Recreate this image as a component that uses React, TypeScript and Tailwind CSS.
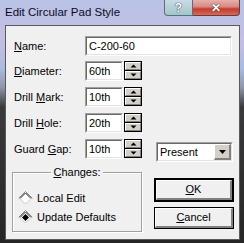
import React from "react";

const Acc = ({ c }: { c: string }) => <span className="underline underline-offset-[1px]">{c}</span>;

const Sunken = ({ className = "", children }: { className?: string; children?: React.ReactNode }) => (
  <div className={`border border-t-[#a0a0a0] border-l-[#a0a0a0] border-r-white border-b-white ${className}`}>
    <div className="h-full border border-t-[#696969] border-l-[#696969] border-r-[#e3e3e3] border-b-[#e3e3e3] bg-white flex items-center pl-[2px]">
      {children}
    </div>
  </div>
);

const SpinHalf = ({ up }: { up?: boolean }) => (
  <div className="flex-1 flex items-center justify-center bg-[#d4d0c8] border-t border-l border-t-white border-l-white border-r border-b border-r-[#808080] border-b-[#808080]">
    <svg width="7" height="4" viewBox="0 0 7 4">
      {up ? <polygon points="0.5,3.5 3.5,0.5 6.5,3.5" fill="#000" /> : <polygon points="0.5,0.5 6.5,0.5 3.5,3.5" fill="#000" />}
    </svg>
  </div>
);

const Spin = () => (
  <div className="w-[18px] h-[19px] ml-px flex flex-col border border-black bg-black gap-px">
    <SpinHalf up />
    <SpinHalf />
  </div>
);

const Row = ({ label, value, spin = true, className = "", children }: { label: React.ReactNode; value: string; spin?: boolean; className?: string; children?: React.ReactNode }) => (
  <div className={`flex items-start h-[20px] ${className}`}>
    <div className="w-[71px] h-[20px] leading-[20px] whitespace-pre">{label}</div>
    {spin ? (
      <>
        <Sunken className="w-[38px] h-[20px]">{value}</Sunken>
        <Spin />
      </>
    ) : (
      <Sunken className="w-[147px] h-[20px]">{value}</Sunken>
    )}
    {children}
  </div>
);

const Diamond = ({ on }: { on?: boolean }) => (
  <svg width="15" height="15" viewBox="0 0 15 15" className="shrink-0">
    <polygon points="7.5,0.5 14.5,7.5 7.5,14.5 0.5,7.5" fill="#fff" />
    <polyline points="0.5,7.5 7.5,0.5 14.5,7.5" fill="none" stroke="#808080" strokeWidth="1" />
    <polyline points="2,7.5 7.5,2 13,7.5" fill="none" stroke="#202020" strokeWidth="1" />
    <polyline points="0.5,7.5 7.5,14.5 14.5,7.5" fill="none" stroke="#e8e8e8" strokeWidth="1" />
    <polyline points="2,7.5 7.5,13 13,7.5" fill="none" stroke="#c8c8c8" strokeWidth="1" />
    {on && <polygon points="7.5,4 11,7.5 7.5,11 4,7.5" fill="#000" />}
  </svg>
);

const Btn = ({ def, children, className = "" }: { def?: boolean; children: React.ReactNode; className?: string }) => (
  <div className={`${def ? "border-2" : "border"} border-black ${className}`}>
    <div className="h-full bg-[#f0f0f0] border-t border-l border-t-white border-l-white border-r-2 border-b-2 border-r-[#808080] border-b-[#808080] flex items-center justify-center">
      {children}
    </div>
  </div>
);

export default function App() {
  return (
    <div className="w-[244px] h-[243px] overflow-hidden bg-[linear-gradient(180deg,#b9c3e6_0%,#c4bde3_18%,#a9bbe0_28%,#8f96a8_36%,#3a3a3c_44%,#262626_100%)] font-['Liberation_Sans',Arial,sans-serif] text-[11px] text-black">
      <div className="h-[25px] flex items-start">
        <div className="pl-[5px] pt-[4px] text-[11.5px] text-[#0b0b1e] leading-[16px]">Edit Circular Pad Style</div>
        <div className="ml-auto mr-[4px] flex">
          <div className="w-[29px] h-[16px] rounded-bl-[4px] border border-t-0 border-[#5b6d80] bg-[linear-gradient(180deg,#c9dbe6_0%,#b7cfd8_50%,#9ec8c8_100%)] flex items-center justify-center text-white font-bold text-[12px] leading-none [text-shadow:0_0_1px_#334,0_0_1px_#334]">?</div>
          <div className="w-[47px] h-[16px] rounded-br-[4px] border border-l-0 border-t-0 border-[#6b3b3b] bg-[linear-gradient(180deg,#e6b0ab_0%,#d88a83_45%,#c43a2c_60%,#d76a5a_100%)] flex items-center justify-center text-white font-bold text-[12px] leading-none [text-shadow:0_0_1px_#402020,0_0_1px_#402020]">✕</div>
        </div>
      </div>
      <div className="ml-[5px] mr-[4px] h-[215px] border border-[#5a5a5a] bg-[#f0f0f0] flex flex-col">
        <div className="pl-[8px] pt-[10px] flex flex-col">
          <Row label={<><Acc c="N" />ame:</>} value="C-200-60" spin={false} />
          <Row className="mt-[5px]" label={<><Acc c="D" />iameter:</>} value="60th" />
          <Row className="mt-[6px]" label={<>Drill <Acc c="M" />ark:</>} value="10th" />
          <Row className="mt-[6px]" label={<>Drill <Acc c="H" />ole:</>} value="20th" />
          <Row className="mt-[6px]" label={<>Guard <Acc c="G" />ap:</>} value="10th">
            <Sunken className="ml-[14px] mt-[3px] w-[77px] h-[20px]">
              <span className="flex-1">Present</span>
              <div className="w-[17px] h-full bg-[#d4d0c8] border-t border-l border-t-white border-l-white border-r-2 border-b-2 border-r-[#808080] border-b-[#808080] flex items-center justify-center">
                <svg width="7" height="4" viewBox="0 0 7 4"><polygon points="0,0 7,0 3.5,4" fill="#000" /></svg>
              </div>
            </Sunken>
          </Row>
        </div>
        <div className="pl-[6px] pt-[7px] flex items-start">
          <div className="relative w-[130px] h-[66px] pt-[6px]">
            <div className="h-[60px] border border-[#a0a0a0] shadow-[inset_1px_1px_0_#fff,1px_1px_0_#fff] flex flex-col pl-[5px] pt-[18px] gap-[4px]">
              <div className="flex items-center gap-[4px] h-[15px]"><Diamond /><span>Local Edit</span></div>
              <div className="flex items-center gap-[4px] h-[15px]"><Diamond on /><span>Update Defaults</span></div>
            </div>
            <div className="absolute top-0 left-0 right-0 flex justify-center">
              <span className="bg-[#f0f0f0] px-[2px] leading-[12px]"><Acc c="C" />hanges:</span>
            </div>
          </div>
          <div className="ml-[12px] pt-[12px] flex flex-col gap-[5px]">
            <Btn def className="w-[80px] h-[24px]"><Acc c="O" />K</Btn>
            <Btn className="w-[80px] h-[22px]"><Acc c="C" />ancel</Btn>
          </div>
        </div>
      </div>
    </div>
  );
}
